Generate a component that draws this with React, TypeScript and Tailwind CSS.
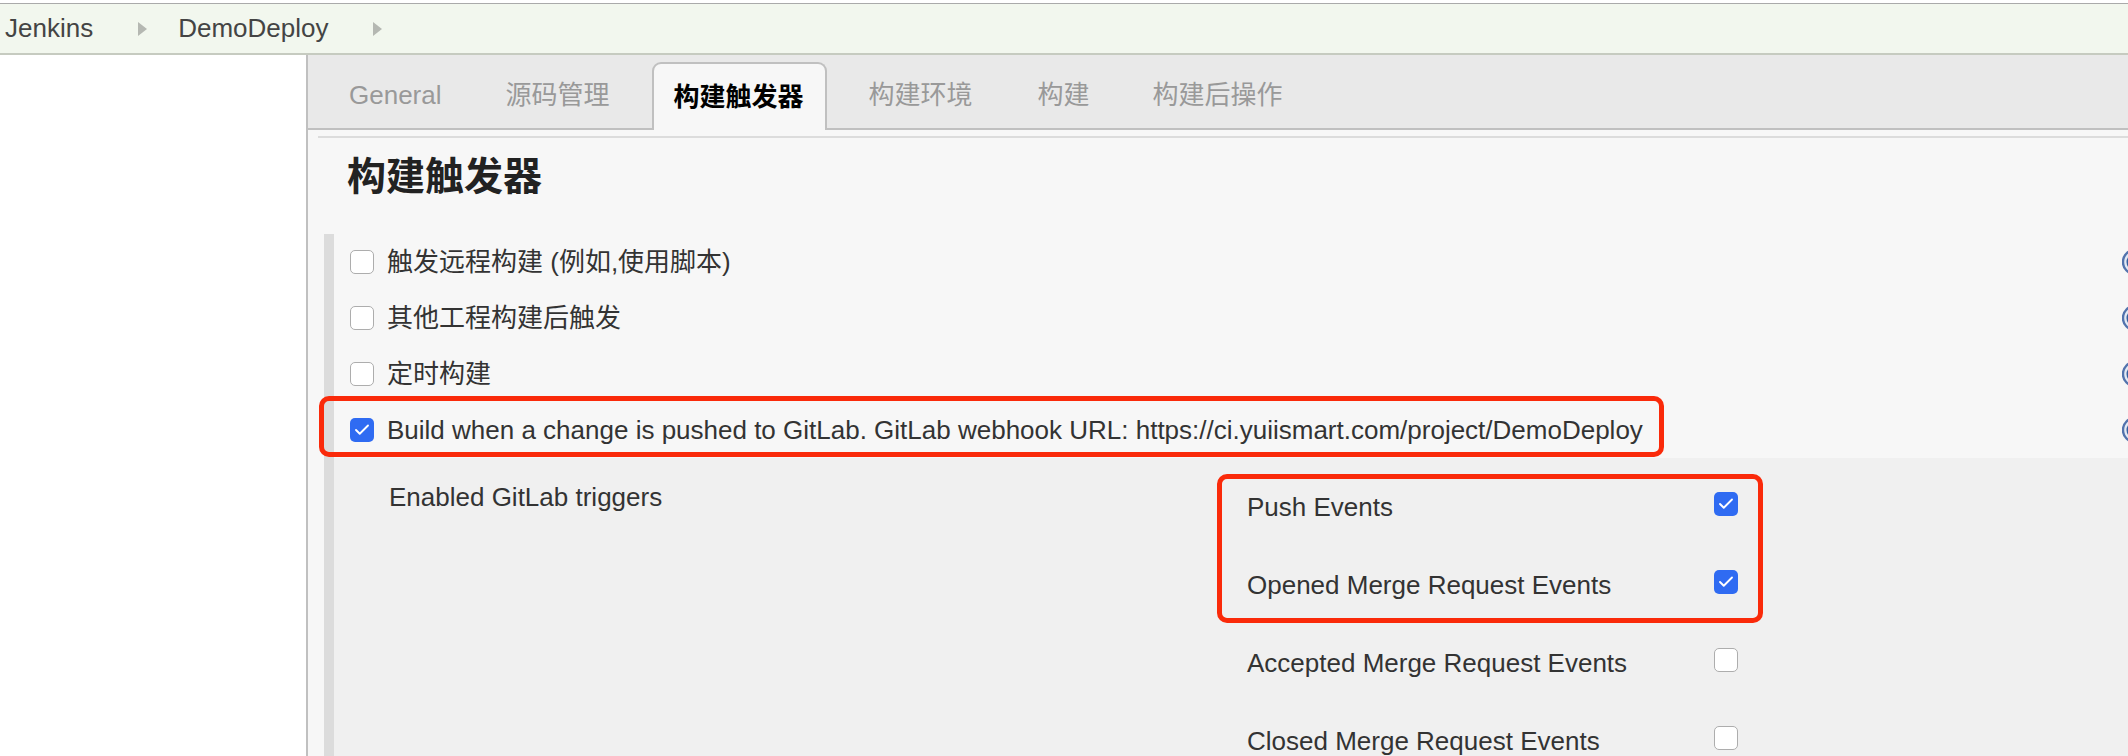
import { Check } from 'lucide-react';

const FONT = 'font-["Liberation_Sans","Noto_Sans_CJK_SC",sans-serif]';

function Box({ checked, className = '' }: { checked?: boolean; className?: string }) {
  if (checked) {
    return (
      <span className={`flex h-[24px] w-[24px] shrink-0 items-center justify-center rounded-[5px] bg-[#2f6bf2] ${className}`}>
        <Check className="h-[18px] w-[18px] text-white" strokeWidth={2.5} />
      </span>
    );
  }
  return (
    <span className={`h-[24px] w-[24px] shrink-0 rounded-[5px] border-[1.5px] border-[#adadad] bg-white ${className}`} />
  );
}

function Help() {
  return (
    <svg className="ml-auto mr-[-20px] h-[26px] w-[26px] shrink-0" viewBox="0 0 26 26">
      <circle cx="13" cy="13" r="12" fill="#e3e9f4" stroke="#5273ad" strokeWidth="2.4" />
      <circle cx="13" cy="13" r="8.5" fill="#36609f" />
    </svg>
  );
}

function Row({ label, checked }: { label: string; checked?: boolean }) {
  return (
    <div className="relative flex h-[56px] items-center pl-[16px]">
      <Box checked={checked} />
      <span className="ml-[13px]">{label}</span>
      <Help />
      {checked && (
        <div className="absolute left-[-15px] top-[-6px] h-[61px] w-[1345px] rounded-[10px] border-[5px] border-[#fa2a0a]" />
      )}
    </div>
  );
}

function Trigger({ label, checked }: { label: string; checked?: boolean }) {
  return (
    <div className="flex h-[78px] w-[491px] items-center justify-between">
      <span>{label}</span>
      <Box checked={checked} className="mb-[6px]" />
    </div>
  );
}

const tabs = [
  { label: 'General', cls: 'px-[32px]' },
  { label: '源码管理', cls: 'pl-[31px] pr-[32px]' },
  { label: '构建触发器', active: true },
  { label: '构建环境', cls: 'px-[32px]' },
  { label: '构建', cls: 'pl-[32px] pr-[30px]' },
  { label: '构建后操作', cls: 'px-[32px]' },
];

function Arrow() {
  return (
    <svg className="ml-[45px] h-[14px] w-[9px]" viewBox="0 0 9 14">
      <path d="M0 0L9 7L0 14Z" fill="#b5b8b2" />
    </svg>
  );
}

export default function App() {
  return (
    <div className={`flex h-[756px] w-[2128px] flex-col overflow-hidden bg-white text-[26px] text-[#333] ${FONT}`}>
      <div className="mt-[3px] flex h-[52px] items-center border-t-[1px] border-b-[2px] border-t-[#aaa] border-b-[#c6cbc0] bg-[#f2f7ee] pl-[5px] text-[#444]">
        <span>Jenkins</span>
        <Arrow />
        <span className="ml-[31px]">DemoDeploy</span>
        <Arrow />
      </div>
      <div className="flex min-h-0 flex-1">
        <div className="w-[306px] shrink-0 bg-white" />
        <div className="flex min-w-0 flex-1 flex-col border-l-[2px] border-[#c0c0c0]">
          <div className="flex h-[75px] shrink-0 items-end gap-[1px] border-b-[2px] border-[#c0c0c0] bg-[#e9e9e9] pl-[9px]">
            {tabs.map((t) =>
              t.active ? (
                <div
                  key={t.label}
                  className="mx-[9px] mb-[-2px] flex h-[68px] items-center rounded-t-[9px] border-x-[2px] border-t-[2px] border-[#c0c0c0] bg-[#f7f7f7] pl-[20px] pr-[21px] font-bold text-black"
                >
                  {t.label}
                </div>
              ) : (
                <div key={t.label} className={`flex h-[66px] items-center text-[#999] ${t.cls}`}>
                  {t.label}
                </div>
              ),
            )}
          </div>
          <div className="min-h-0 flex-1 bg-[#f7f7f7] pl-[16px]">
            <div className="mt-[6px] ml-[-6px] h-[2px] bg-[#dcdcdc]" />
            <h1 className="ml-[23px] mt-[14px] h-[50px] text-[39px] leading-[50px] font-bold text-[#222]">构建触发器</h1>
            <div className="mt-[32px] border-l-[10px] border-[#dcdcdc]">
              <Row label="触发远程构建 (例如,使用脚本)" />
              <Row label="其他工程构建后触发" />
              <Row label="定时构建" />
              <Row checked label="Build when a change is pushed to GitLab. GitLab webhook URL: https://ci.yuiismart.com/project/DemoDeploy" />
              <div className="flex h-[298px] bg-[#f0f0f0] pt-[10px] pl-[55px]">
                <div className="w-[858px] shrink-0 pt-[10px]">Enabled GitLab triggers</div>
                <div>
                  <div className="relative">
                    <Trigger checked label="Push Events" />
                    <Trigger checked label="Opened Merge Request Events" />
                    <div className="absolute left-[-30px] top-[6px] h-[149px] w-[546px] rounded-[10px] border-[5px] border-[#fa2a0a]" />
                  </div>
                  <Trigger label="Accepted Merge Request Events" />
                  <Trigger label="Closed Merge Request Events" />
                </div>
              </div>
            </div>
          </div>
        </div>
      </div>
    </div>
  );
}
